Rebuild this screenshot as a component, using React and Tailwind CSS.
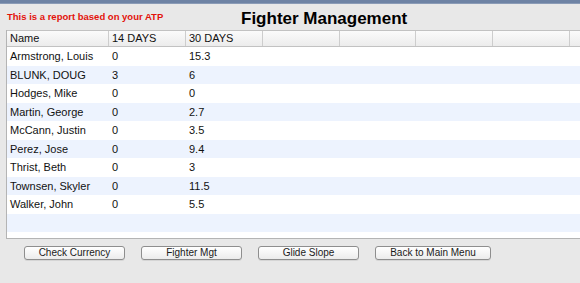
import React from 'react'

const pilots = [
    ['Armstrong, Louis', '0', '15.3'],
    ['BLUNK, DOUG', '3', '6'],
    ['Hodges, Mike', '0', '0'],
    ['Martin, George', '0', '2.7'],
    ['McCann, Justin', '0', '3.5'],
    ['Perez, Jose', '0', '9.4'],
    ['Thrist, Beth', '0', '3'],
    ['Townsen, Skyler', '0', '11.5'],
    ['Walker, John', '0', '5.5'],
    ['', '', ''],
]

const extraCols = [77, 76, 77, 77]

function Button({ children, wide }) {
    return (
        <button
            type="button"
            className={`h-[14px] ${wide ? 'w-[116px]' : 'w-[101px]'} rounded-[3px] border border-[#8e8e8e] bg-gradient-to-b from-white to-[#ececec] text-[10px] leading-[12px] text-[#1a1a1a] shadow-[0_1px_0_rgba(0,0,0,0.08)]`}
        >
            {children}
        </button>
    )
}

export default function App() {
    return (
        <div className="w-[580px] h-[283px] overflow-hidden bg-[#e8e8e8] font-['Liberation_Sans',Arial,sans-serif] text-[#111]">
            <div className="h-[4px] bg-[#6e83a4] border-b border-[#8a9bb6]"></div>

            <div className="h-[26px] flex items-end">
                <span className="w-[156px] pl-[7px] pb-[6px] text-[9.5px] font-bold text-[#e3120b] whitespace-nowrap box-content">
                    This is a report based on your ATP
                </span>
                <h1 className="ml-[78px] text-[17px] leading-[22px] font-bold text-black whitespace-nowrap">
                    Fighter Management
                </h1>
            </div>

            <div className="ml-[6px] w-[620px] bg-white border-l border-b border-[#b4b4b4] pb-[6px]">
                <div className="flex h-[17px] bg-gradient-to-b from-[#fbfbfb] to-[#ececec] border-t border-b border-[#c2c2c2] text-[11px] leading-[15px]">
                    <div className="w-[102px] pl-[3px] border-r border-[#cdcdcd]">Name</div>
                    <div className="w-[77px] pl-[3px] border-r border-[#cdcdcd]">14 DAYS</div>
                    <div className="w-[77px] pl-[3px] border-r border-[#cdcdcd]">30 DAYS</div>
                    {extraCols.map((w, i) => (
                        <div key={i} style={{ width: w }} className="border-r border-[#cdcdcd]"></div>
                    ))}
                </div>
                {pilots.map((p, i) => (
                    <div
                        key={i}
                        className={`flex h-[18.5px] items-center text-[11px] ${i % 2 === 1 ? 'bg-[#edf3fe]' : 'bg-white'}`}
                    >
                        <div className="w-[102px] pl-[3px]">{p[0]}</div>
                        <div className="w-[77px] pl-[3px]">{p[1]}</div>
                        <div className="w-[77px] pl-[3px]">{p[2]}</div>
                    </div>
                ))}
            </div>

            <div className="flex gap-[16px] pl-[24px] mt-[7px]">
                <Button>Check Currency</Button>
                <Button>Fighter Mgt</Button>
                <Button>Glide Slope</Button>
                <Button wide>Back to Main Menu</Button>
            </div>
        </div>
    )
}
